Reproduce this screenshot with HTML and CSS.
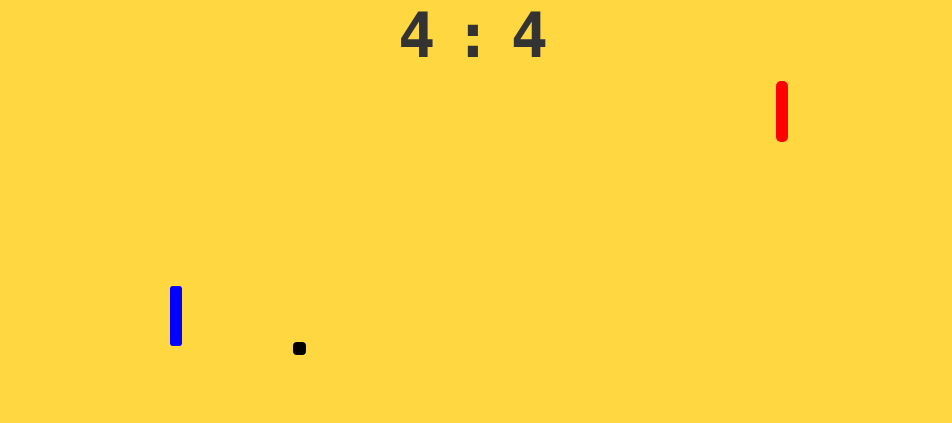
FILE: index.html
```html
<!DOCTYPE html>
<html lang="en">
<head>
<meta charset="utf-8">
<title>Pong</title>
<link rel="stylesheet" href="styles.css">
</head>
<body>
<main class="court">
  <div class="score">
    <span class="score-num">4</span>
    <span class="score-sep">:</span>
    <span class="score-num">4</span>
  </div>
  <div class="paddle paddle-left"></div>
  <div class="paddle paddle-right"></div>
  <div class="ball"></div>
</main>
</body>
</html>
```

FILE: styles.css
```css
html, body {
  margin: 0;
  padding: 0;
  background: #ffd740;
}

.court {
  position: relative;
  width: 952px;
  height: 423px;
  overflow: hidden;
  background: #ffd740;
}

.score {
  display: flex;
  justify-content: center;
  gap: 19px;
  padding-top: 5px;
  padding-right: 6px;
  font-family: "DejaVu Sans Mono", "Liberation Mono", monospace;
  font-weight: bold;
  font-size: 62px;
  line-height: 62px;
  color: #333333;
}

.paddle {
  position: absolute;
  width: 12px;
  height: 60px;
}

.paddle-left {
  left: 170px;
  top: 286px;
  background: #0000ff;
  border-radius: 3px;
}

.paddle-right {
  left: 776px;
  top: 81px;
  height: 61px;
  background: #ff0000;
  border-radius: 5px;
}

.ball {
  position: absolute;
  left: 293px;
  top: 342px;
  width: 13px;
  height: 13px;
  background: #000000;
  border-radius: 4px;
}
```
